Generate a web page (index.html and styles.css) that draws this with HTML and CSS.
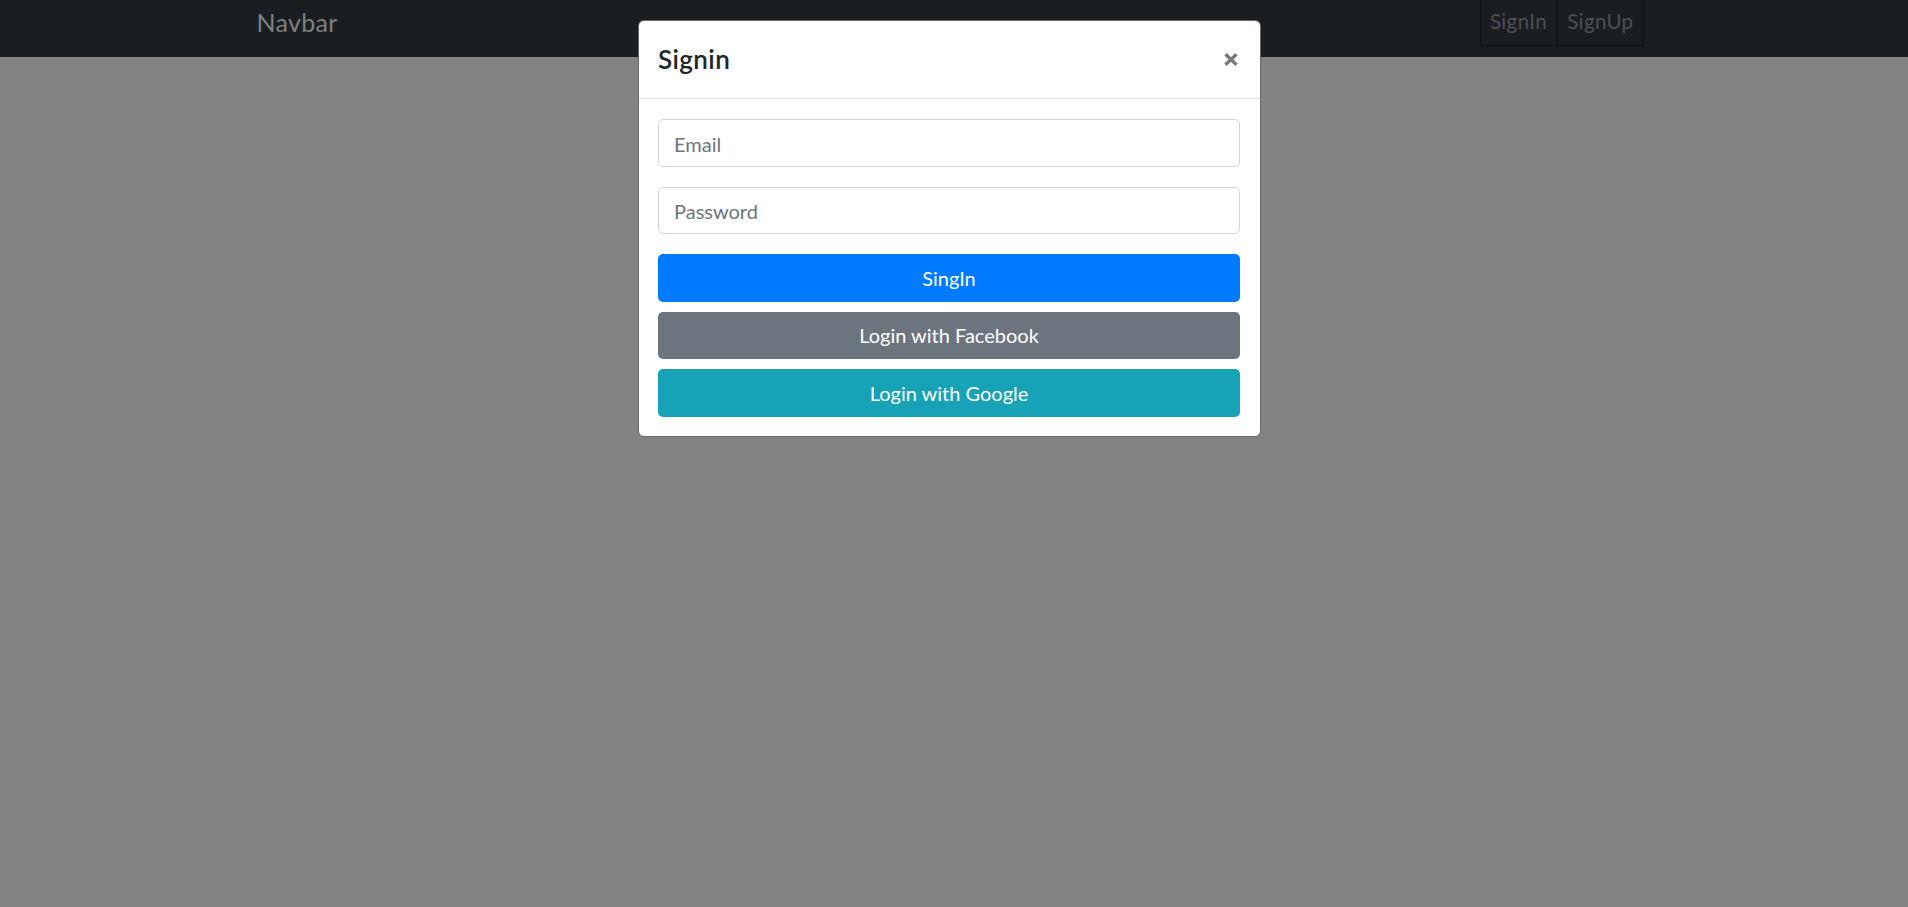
FILE: index.html
```html
<!DOCTYPE html>
<html lang="en">
<head>
<meta charset="utf-8">
<title>Signin</title>
<link rel="stylesheet" href="styles.css">
</head>
<body>
<nav class="navbar">
  <div class="container">
    <a class="brand" href="#">Navbar</a>
    <ul class="nav-links">
      <li><a href="#">SignIn</a></li>
      <li><a href="#">SignUp</a></li>
    </ul>
  </div>
</nav>
<div class="modal">
  <div class="modal-header">
    <h5 class="modal-title">Signin</h5>
    <button class="close" type="button" aria-label="Close">
      <svg width="14" height="13" viewBox="0 0 14 13"><path d="M1.5 1.2 L12.5 11.8 M12.5 1.2 L1.5 11.8" stroke="#7b7b7b" stroke-width="3.4" stroke-linecap="butt"/></svg>
    </button>
  </div>
  <form class="modal-body">
    <input class="input" type="email" placeholder="Email">
    <input class="input" type="password" placeholder="Password">
    <button type="button" class="btn btn-primary">SingIn</button>
    <button type="button" class="btn btn-secondary">Login with Facebook</button>
    <button type="button" class="btn btn-info">Login with Google</button>
  </form>
</div>
</body>
</html>
```
FILE: styles.css
```css
* { box-sizing: border-box; }
html, body { height: 100%; }
body {
  margin: 0;
  background: #828282;
  font-family: Lato, "Noto Sans", sans-serif;
}
.navbar {
  height: 57px;
  background: #1b1e21;
}
.container {
  max-width: 1425px;
  margin: 0 auto;
  padding: 0 23px 0 15px;
  height: 100%;
  display: flex;
  justify-content: space-between;
  align-items: flex-start;
}
.brand {
  color: #7f7f80;
  text-decoration: none;
  font-size: 25px;
  line-height: 40px;
  margin-top: 2px;
  letter-spacing: 0.3px;
}
.nav-links {
  list-style: none;
  margin: 0;
  padding: 0;
  display: flex;
}
.nav-links li {
  border: 1px solid #111315;
  border-top: none;
  height: 46px;
}
.nav-links a {
  display: block;
  padding: 0 9px;
  line-height: 42px;
  font-size: 20.5px;
  letter-spacing: 0.4px;
  color: #4c4f52;
  text-decoration: none;
}
.modal {
  position: absolute;
  top: 20px;
  left: 638px;
  width: 623px;
  background: #fff;
  border: 1px solid #686868;
  border-radius: 6px;
}
.modal-header {
  height: 78px;
  border-bottom: 1px solid #dee2e6;
  display: flex;
  align-items: center;
  justify-content: space-between;
  padding: 0 22px 0 19px;
}
.modal-title {
  margin: 0;
  font-size: 26px;
  font-weight: 600;
  letter-spacing: 0.4px;
  color: #212529;
  padding-bottom: 2px;
}
.close {
  border: none;
  background: none;
  padding: 0;
  width: 14px;
  height: 13px;
  display: flex;
  margin-bottom: 1px;
}
.modal-body {
  padding: 20px 20px 19.5px 19px;
  display: flex;
  flex-direction: column;
}
.input {
  height: 47.5px;
  border: 1px solid #ced4da;
  border-radius: 5px;
  padding: 2px 15px 0;
  font-family: inherit;
  font-size: 20px;
  color: #495057;
  margin-bottom: 20px;
}
.input::placeholder { color: #6c757d; }
.btn {
  height: 47.5px;
  border: none;
  border-radius: 5px;
  font-family: inherit;
  font-size: 20px;
  color: #fff;
  padding: 0 15px;
}
.btn + .btn { margin-top: 10px; }
.btn-primary { background: #007bff; }
.btn-secondary { background: #6c757d; }
.btn-info { background: #17a2b8; }
```
